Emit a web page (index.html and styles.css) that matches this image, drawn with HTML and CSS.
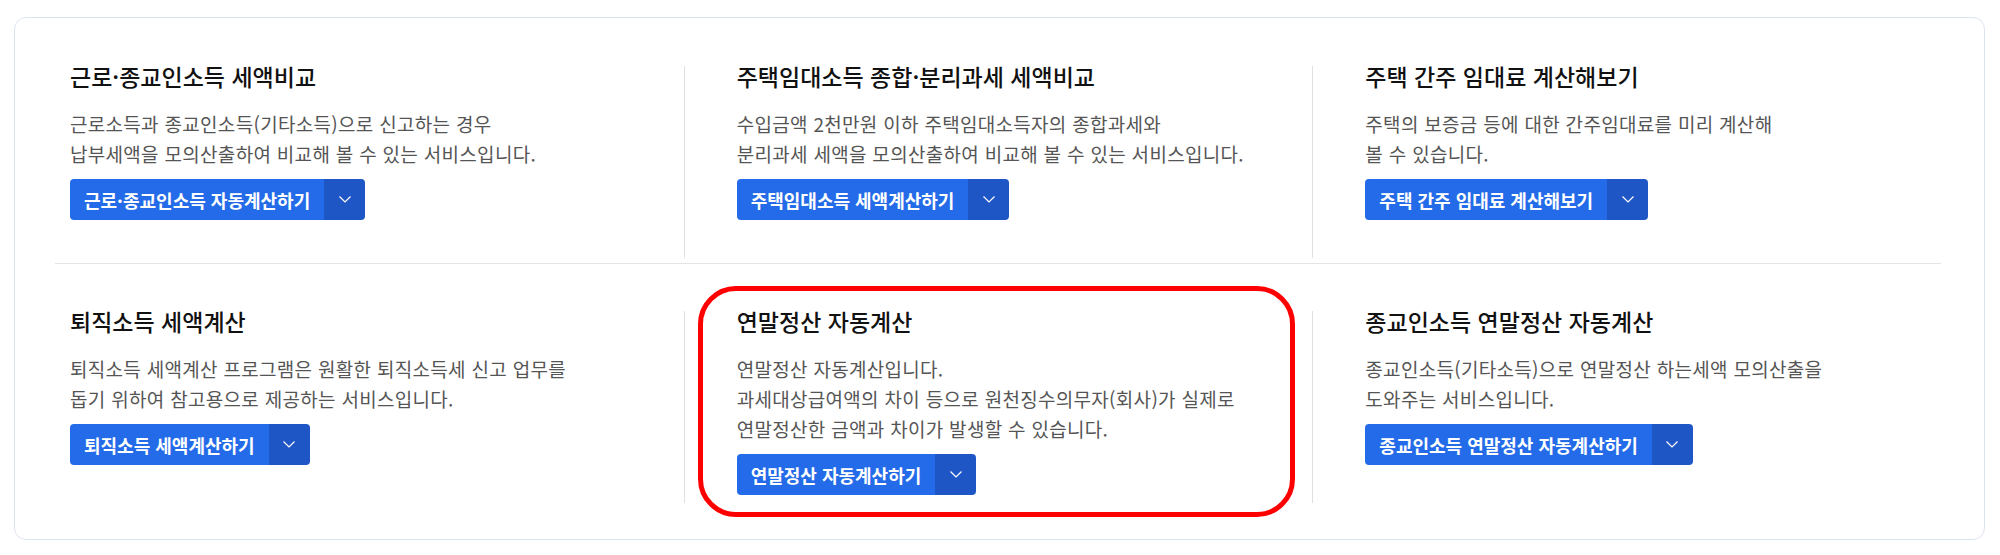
FILE: index.html
```html
<!DOCTYPE html>
<html lang="ko">
<head>
  <meta charset="UTF-8">
  <meta name="viewport" content="width=device-width, initial-scale=1.0">
  <title>세액계산 서비스</title>
  <link rel="stylesheet" href="styles.css">
</head>
<body>
  <div class="service-box">
    <ul class="service-row">
      <li class="service">
        <h3 class="service-title">근로·종교인소득 세액비교</h3>
        <p class="service-desc">근로소득과 종교인소득(기타소득)으로 신고하는 경우<br>납부세액을 모의산출하여 비교해 볼 수 있는 서비스입니다.</p>
        <div class="btn-group">
          <button class="btn-main">근로·종교인소득 자동계산하기</button>
          <button class="btn-more"><svg viewBox="0 0 12 7" width="12" height="7"><path d="M0.5 0.5 L6 6 L11.5 0.5" fill="none" stroke="#fff" stroke-width="1.2"/></svg></button>
        </div>
      </li>
      <li class="service">
        <h3 class="service-title">주택임대소득 종합·분리과세 세액비교</h3>
        <p class="service-desc">수입금액 2천만원 이하 주택임대소득자의 종합과세와<br>분리과세 세액을 모의산출하여 비교해 볼 수 있는 서비스입니다.</p>
        <div class="btn-group">
          <button class="btn-main">주택임대소득 세액계산하기</button>
          <button class="btn-more"><svg viewBox="0 0 12 7" width="12" height="7"><path d="M0.5 0.5 L6 6 L11.5 0.5" fill="none" stroke="#fff" stroke-width="1.2"/></svg></button>
        </div>
      </li>
      <li class="service">
        <h3 class="service-title">주택 간주 임대료 계산해보기</h3>
        <p class="service-desc">주택의 보증금 등에 대한 간주임대료를 미리 계산해<br>볼 수 있습니다.</p>
        <div class="btn-group">
          <button class="btn-main">주택 간주 임대료 계산해보기</button>
          <button class="btn-more"><svg viewBox="0 0 12 7" width="12" height="7"><path d="M0.5 0.5 L6 6 L11.5 0.5" fill="none" stroke="#fff" stroke-width="1.2"/></svg></button>
        </div>
      </li>
    </ul>
    <ul class="service-row">
      <li class="service">
        <h3 class="service-title">퇴직소득 세액계산</h3>
        <p class="service-desc">퇴직소득 세액계산 프로그램은 원활한 퇴직소득세 신고 업무를<br>돕기 위하여 참고용으로 제공하는 서비스입니다.</p>
        <div class="btn-group">
          <button class="btn-main">퇴직소득 세액계산하기</button>
          <button class="btn-more"><svg viewBox="0 0 12 7" width="12" height="7"><path d="M0.5 0.5 L6 6 L11.5 0.5" fill="none" stroke="#fff" stroke-width="1.2"/></svg></button>
        </div>
      </li>
      <li class="service marked">
        <h3 class="service-title">연말정산 자동계산</h3>
        <p class="service-desc">연말정산 자동계산입니다.<br>과세대상급여액의 차이 등으로 원천징수의무자(회사)가 실제로<br>연말정산한 금액과 차이가 발생할 수 있습니다.</p>
        <div class="btn-group">
          <button class="btn-main">연말정산 자동계산하기</button>
          <button class="btn-more"><svg viewBox="0 0 12 7" width="12" height="7"><path d="M0.5 0.5 L6 6 L11.5 0.5" fill="none" stroke="#fff" stroke-width="1.2"/></svg></button>
        </div>
      </li>
      <li class="service">
        <h3 class="service-title">종교인소득 연말정산 자동계산</h3>
        <p class="service-desc">종교인소득(기타소득)으로 연말정산 하는세액 모의산출을<br>도와주는 서비스입니다.</p>
        <div class="btn-group">
          <button class="btn-main">종교인소득 연말정산 자동계산하기</button>
          <button class="btn-more"><svg viewBox="0 0 12 7" width="12" height="7"><path d="M0.5 0.5 L6 6 L11.5 0.5" fill="none" stroke="#fff" stroke-width="1.2"/></svg></button>
        </div>
      </li>
    </ul>
  </div>
</body>
</html>
```

FILE: styles.css
```css
body {
  margin: 0;
  background: #fff;
  font-family: "Noto Sans CJK KR", "Noto Sans", sans-serif;
  color: #111;
}
.service-box {
  margin: 17px 15px 0 14px;
  padding: 0 43px 36px 40px;
  border: 1px solid #dde4f1;
  border-radius: 12px;
}
.service-row {
  display: grid;
  grid-template-columns: repeat(3, 1fr);
  margin: 0;
  padding: 48px 0 5px;
  list-style: none;
}
.service-row + .service-row {
  border-top: 1px solid #e4e4e4;
  padding-top: 47px;
  padding-bottom: 0;
}
.service {
  position: relative;
  min-height: 192px;
  padding-left: 52px;
  border-left: 1px solid #e0e0e0;
}
.service:first-child {
  padding-left: 15px;
  border-left: 0;
}
.service-title {
  margin: -1px 0 0;
  font-size: 23px;
  font-weight: 500;
  line-height: 23px;
  color: #111;
}
.service-desc {
  margin: 21px 0 0;
  font-size: 19px;
  letter-spacing: 0.3px;
  line-height: 30px;
  color: #555;
}
.btn-group {
  display: inline-flex;
  margin-top: 10px;
  border-radius: 4px;
  overflow: hidden;
}
.btn-group button {
  height: 41px;
  border: 0;
  margin: 0;
  color: #fff;
  font-family: inherit;
  cursor: pointer;
}
.btn-main {
  padding: 0 14px;
  background: #236be8;
  font-size: 18px;
  font-weight: 700;
}
.btn-more {
  width: 41px;
  padding: 0;
  background: #1f56c6;
  display: flex;
  align-items: center;
  justify-content: center;
}
.marked::after {
  content: "";
  position: absolute;
  left: 13px;
  right: 17px;
  top: -25px;
  bottom: -14px;
  border: 5px solid #ff0000;
  border-radius: 38px;
  pointer-events: none;
}
```
